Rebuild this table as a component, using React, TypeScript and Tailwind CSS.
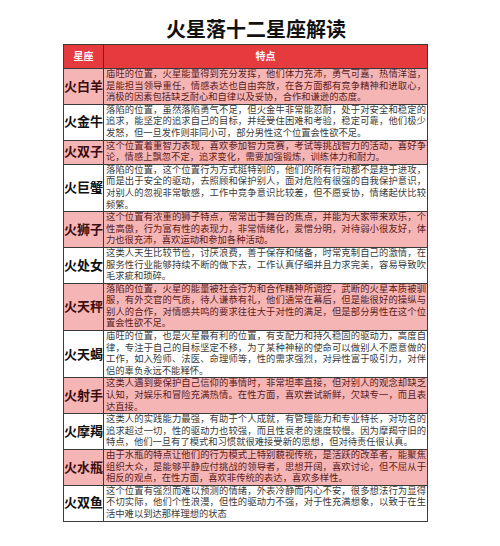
const rows: { name: string; pink: boolean; lines: string[] }[] = [
  {
    name: '火白羊',
    pink: true,
    lines: [
      '庙旺的位置，火星能量得到充分发挥，他们体力充沛，勇气可嘉，热情洋溢，',
      '是能担当领导重任，情感表达也自由奔放，在各方面都有竞争精神和进取心，',
      '消极的因素包括缺乏耐心和自律以及妥协，合作和谦逊的态度。',
    ],
  },
  {
    name: '火金牛',
    pink: false,
    lines: [
      '落陷的位置，虽然落陷勇气不足，但火金牛非常能忍耐，处于对安全和稳定的',
      '追求，能坚定的追求自己的目标，并经受住困难和考验，稳定可靠，他们极少',
      '发怒，但一旦发作则非同小可，部分男性这个位置会性欲不足。',
    ],
  },
  {
    name: '火双子',
    pink: true,
    lines: [
      '这个位置着重智力表现，喜欢参加智力竞赛，考试等挑战智力的活动，喜好争',
      '论，情感上飘忽不定，追求变化，需要加强锻炼，训练体力和耐力。',
    ],
  },
  {
    name: '火巨蟹',
    pink: false,
    lines: [
      '落陷的位置，这个位置行为方式挺特别的，他们的所有行动都不是趋于进攻，',
      '而是出于安全的驱动，去照顾和保护别人，面对危险有很强的自我保护意识，',
      '对别人的忽视非常敏感，工作中竞争意识比较差，但不愿妥协，情绪起伏比较',
      '频繁。',
    ],
  },
  {
    name: '火狮子',
    pink: true,
    lines: [
      '这个位置有浓重的狮子特点，常常出于舞台的焦点，并能为大家带来欢乐，个',
      '性高傲，行为富有性的表现力，非常情绪化，爱憎分明，对待弱小很友好，体',
      '力也很充沛，喜欢运动和参加各种活动。',
    ],
  },
  {
    name: '火处女',
    pink: false,
    lines: [
      '这类人天生比较节俭，讨厌浪费，善于保存和储备，时常克制自己的激情，在',
      '服务性行业能够持续不断的做下去，工作认真仔细并且力求完美，容易导致吹',
      '毛求疵和琐碎。',
    ],
  },
  {
    name: '火天秤',
    pink: true,
    lines: [
      '落陷的位置，火星的能量被社会行为和合作精神所调控，武断的火星本质被驯',
      '服，有外交官的气质，待人谦恭有礼，他们通常在幕后，但是能很好的操纵与',
      '别人的合作，对情感共鸣的要求往往大于对性的满足，但是部分男性在这个位',
      '置会性欲不足。',
    ],
  },
  {
    name: '火天蝎',
    pink: false,
    lines: [
      '庙旺的位置，也是火星最有利的位置，有支配力和持久稳固的驱动力，高度自',
      '律，专注于自己的目标坚定不移，为了某种神秘的使命可以做别人不愿意做的',
      '工作，如入殓师、法医、命理师等，性的需求强烈，对异性富于吸引力，对伴',
      '侣的辜负永远不能释怀。',
    ],
  },
  {
    name: '火射手',
    pink: true,
    lines: [
      '这类人遇到要保护自己信仰的事情时，非常坦率直接，但对别人的观念却缺乏',
      '认知，对娱乐和冒险充满热情。在性方面，喜欢尝试新鲜，欠缺专一，而且表',
      '达直接。',
    ],
  },
  {
    name: '火摩羯',
    pink: false,
    lines: [
      '这类人的实践能力最强，有助于个人成就，有管理能力和专业特长，对功名的',
      '追求超过一切，性的驱动力也较强，而且性衰老的速度较慢。因为摩羯守旧的',
      '特点，他们一旦有了模式和习惯就很难接受新的思想，但对待责任很认真。',
    ],
  },
  {
    name: '火水瓶',
    pink: true,
    lines: [
      '由于水瓶的特点让他们的行为模式上特别藐视传统，是活跃的改革者，能聚焦',
      '组织大众，是能够平静应付挑战的领导者，思想开阔，喜欢讨论，但不屈从于',
      '相反的观点，在性方面，喜欢非传统的表达，喜欢多样性。',
    ],
  },
  {
    name: '火双鱼',
    pink: false,
    lines: [
      '这个位置有强烈而难以预测的情绪，外表冷静而内心不安，很多想法行为显得',
      '不切实际，他们个性浪漫，但性的驱动力不强，对于性充满想象，以致于在生',
      '活中难以到达那样理想的状态',
    ],
  },
];

export default function App() {
  return (
    <div className="w-[500px] h-[546px] bg-white font-['Liberation_Sans','Noto_Sans_CJK_SC',sans-serif] overflow-hidden">
      <div className="pt-[17px] pl-[12px] text-center text-[20px] leading-[26px] font-bold text-[#111]">
        火星落十二星座解读
      </div>
      <div className="ml-[63px] mt-[1px] w-[365px] border border-[#3a3a3a]">
        {/* header */}
        <div className="flex h-[24px] bg-[#e53b3f] border-b border-[#3a3a3a] text-white text-[10px] font-bold">
          <div className="w-[40px] shrink-0 border-r border-[#3a3a3a] flex items-center justify-center">星座</div>
          <div className="flex-1 flex items-center justify-center">特点</div>
        </div>
        {rows.map((row, i) => (
          <div
            key={row.name}
            className={`flex ${i < rows.length - 1 ? 'border-b border-[#3a3a3a]' : ''} ${row.pink ? 'bg-[#f5b5b5]' : 'bg-white'}`}
          >
            <div
              className={`w-[40px] shrink-0 border-r border-[#3a3a3a] flex items-center justify-center text-[13px] font-bold whitespace-nowrap ${row.pink ? 'text-[#3b0d0e]' : 'text-[#111]'}`}
            >
              {row.name}
            </div>
            <div
              className={`flex-1 min-w-0 pl-[2px] pr-[1px] text-[9.3px] leading-[11.6px] ${row.pink ? 'text-[#5a1c1d]' : 'text-[#3a3a3a]'}`}
            >
              {row.lines.map((line, j) => (
                <div
                  key={j}
                  className={`whitespace-nowrap ${j < row.lines.length - 1 ? 'text-justify [text-align-last:justify]' : ''}`}
                >
                  {line}
                </div>
              ))}
            </div>
          </div>
        ))}
      </div>
    </div>
  );
}
